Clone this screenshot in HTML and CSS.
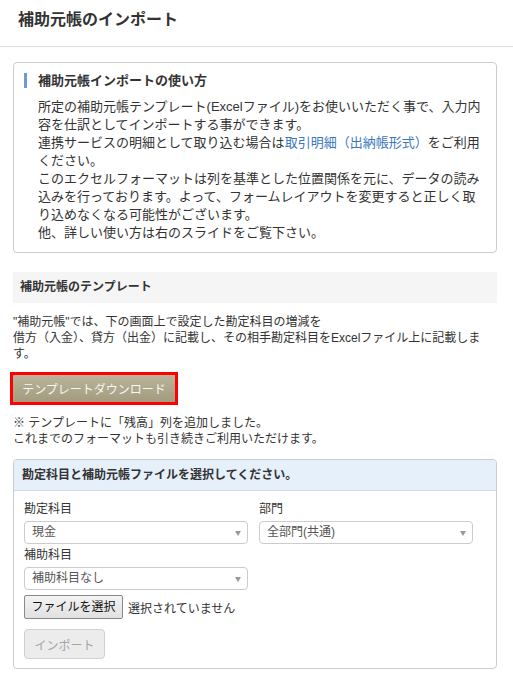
FILE: index.html
```html
<!DOCTYPE html>
<html lang="ja">
<head>
<meta charset="utf-8">
<title>補助元帳のインポート</title>
<link rel="stylesheet" href="styles.css">
</head>
<body>
<header class="page-header">
  <h1 class="page-title">補助元帳のインポート</h1>
</header>
<main class="content">
  <section class="guide">
    <h2 class="guide-title">補助元帳インポートの使い方</h2>
    <p class="guide-text">所定の補助元帳テンプレート(Excelファイル)をお使いいただく事で、入力内容を仕訳としてインポートする事ができます。<br>連携サービスの明細として取り込む場合は<a class="link" href="#">取引明細（出納帳形式）</a><span>をご利用</span><span>ください。</span><br>このエクセルフォーマットは列を基準とした位置関係を元に、データの読み込みを行っております。よって、フォームレイアウトを変更すると正しく取り込めなくなる可能性がございます。<br>他、詳しい使い方は右のスライドをご覧下さい。</p>
  </section>

  <h3 class="section-bar">補助元帳のテンプレート</h3>
  <p class="desc">"補助元帳"では、下の画面上で設定した勘定科目の増減を<br>借方（入金）、貸方（出金）に記載し、その相手勘定科目をExcelファイル上に記載します。</p>
  <div class="dl-row">
    <button class="dl-btn" type="button">テンプレートダウンロード</button>
  </div>
  <p class="note">※ テンプレートに「残高」列を追加しました。<br>これまでのフォーマットも引き続きご利用いただけます。</p>

  <section class="panel">
    <div class="panel-head">勘定科目と補助元帳ファイルを選択してください。</div>
    <div class="panel-body">
      <div class="field-grid">
        <div class="field">
          <label class="field-label">勘定科目</label>
          <div class="select select-left"><span class="select-value">現金</span></div>
        </div>
        <div class="field">
          <label class="field-label">部門</label>
          <div class="select select-right"><span class="select-value">全部門(共通)</span></div>
        </div>
        <div class="field">
          <label class="field-label">補助科目</label>
          <div class="select select-left"><span class="select-value">補助科目なし</span></div>
        </div>
      </div>
      <div class="file-row">
        <span class="file-btn">ファイルを選択</span>
        <span class="file-status">選択されていません</span>
      </div>
      <button class="import-btn" type="button" disabled>インポート</button>
    </div>
  </section>
</main>
</body>
</html>
```

FILE: styles.css
```css
* {
  box-sizing: border-box;
}

html, body {
  margin: 0;
  padding: 0;
  background: #ffffff;
}

body {
  font-family: "Liberation Sans", "Noto Sans CJK JP", sans-serif;
  color: #333333;
  font-size: 13px;
}

.page-header {
  height: 47px;
  border-bottom: 1px solid #e2e2e2;
  padding: 8px 18px 0;
}

.page-title {
  margin: 0;
  font-size: 16px;
  line-height: 24px;
  font-weight: bold;
  color: #333333;
}

.content {
  padding: 15px 16px 0 13px;
}

.guide {
  border: 1px solid #cccccc;
  border-radius: 4px;
  padding: 10px 11px 10px 10px;
}

.guide-title {
  margin: 0;
  border-left: 3px solid #7199d8;
  padding-left: 11px;
  font-size: 13px;
  line-height: 15px;
  font-weight: bold;
  color: #333333;
}

.guide-text {
  margin: 10px 0 0 14px;
  font-size: 13px;
  line-height: 18px;
  color: #333333;
}

.link {
  color: #3a78bd;
  text-decoration: none;
}

.section-bar {
  margin: 19px 0 0;
  height: 31px;
  background: #f5f5f5;
  padding: 0 7px;
  font-size: 12px;
  line-height: 31px;
  font-weight: bold;
  color: #333333;
}

.desc {
  margin: 11px 0 0;
  font-size: 12px;
  line-height: 16px;
}

.dl-row {
  margin-top: 13px;
}

.dl-btn {
  display: block;
  width: 162px;
  height: 27px;
  border: none;
  border-radius: 0;
  outline: 3px solid #ff0000;
  background: linear-gradient(#bab49c, #a29b7e);
  color: #f7f6f1;
  font-family: inherit;
  font-size: 12px;
  padding: 0;
}

.note {
  margin: 13px 0 0;
  font-size: 12px;
  line-height: 16px;
}

.panel {
  margin-top: 12px;
  border: 1px solid #cccccc;
  border-radius: 4px;
  overflow: hidden;
}

.panel-head {
  height: 31px;
  background: #e6f0fb;
  border-bottom: 1px solid #cfdbe8;
  padding: 0 8px;
  font-size: 12px;
  line-height: 30px;
  font-weight: bold;
  color: #333333;
}

.panel-body {
  padding: 10px 10px 9px;
}

.field-grid {
  display: grid;
  grid-template-columns: 224px 214px;
  column-gap: 11px;
  row-gap: 3px;
}

.field {
  display: flex;
  flex-direction: column;
  gap: 4px;
}

.field-label {
  font-size: 12px;
  line-height: 16px;
  color: #333333;
}

.select {
  position: relative;
  height: 23px;
  border: 1px solid #cccccc;
  border-radius: 4px;
  background: #ffffff;
  padding: 0 20px 0 7px;
  font-size: 12px;
  line-height: 21px;
  color: #555555;
}

.select::after {
  content: "";
  position: absolute;
  right: 6px;
  top: 9px;
  border-left: 3px solid transparent;
  border-right: 3px solid transparent;
  border-top: 5px solid #9a9a9a;
}

.file-row {
  margin-top: 5px;
  display: flex;
  align-items: center;
  gap: 5px;
}

.file-btn {
  display: inline-block;
  width: 99px;
  height: 24px;
  border: 1px solid #8a8a8a;
  border-radius: 2px;
  background: linear-gradient(#f3f3f3, #e1e1e1);
  font-size: 12px;
  line-height: 22px;
  text-align: center;
  color: #111111;
}

.file-status {
  font-size: 12px;
  color: #333333;
}

.import-btn {
  display: block;
  margin-top: 10px;
  width: 81px;
  height: 30px;
  border: 1px solid #cfcfcf;
  border-radius: 4px;
  background: #ececec;
  color: #a5a5a5;
  font-family: inherit;
  font-size: 12px;
  padding: 0;
}
```
